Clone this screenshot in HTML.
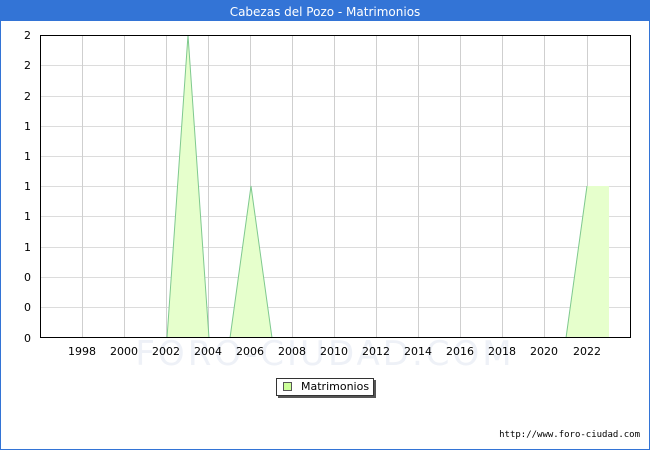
<!DOCTYPE html>
<html><head><style>
body{margin:0;width:650px;height:450px;overflow:hidden;font-family:"DejaVu Sans","Liberation Sans",sans-serif;}
</style></head><body>
<svg width="650" height="450" xmlns="http://www.w3.org/2000/svg" font-family="DejaVu Sans, Liberation Sans, sans-serif">
<rect x="0" y="0" width="650" height="450" fill="#fff"/>
<rect x="0.5" y="0.5" width="649" height="449" fill="none" stroke="#3374d6"/>
<rect x="0" y="0" width="650" height="21" fill="#3374d6"/>
<text x="325" y="16" fill="#fff" font-size="12" text-anchor="middle">Cabezas del Pozo - Matrimonios</text>
<text x="325" y="365" fill="#eef1f7" font-size="34" text-anchor="middle" letter-spacing="3">FORO-CIUDAD.COM</text>
<g stroke="#dcdcdc" stroke-width="1">
<line x1="40" y1="65.5" x2="631" y2="65.5"/><line x1="40" y1="96.5" x2="631" y2="96.5"/>
<line x1="40" y1="126.5" x2="631" y2="126.5"/><line x1="40" y1="156.5" x2="631" y2="156.5"/>
<line x1="40" y1="186.5" x2="631" y2="186.5"/><line x1="40" y1="216.5" x2="631" y2="216.5"/>
<line x1="40" y1="247.5" x2="631" y2="247.5"/><line x1="40" y1="277.5" x2="631" y2="277.5"/>
<line x1="40" y1="307.5" x2="631" y2="307.5"/>
</g>
<g stroke="#cfcfcf" stroke-width="1">
<line x1="82.5" y1="35" x2="82.5" y2="338"/><line x1="124.5" y1="35" x2="124.5" y2="338"/>
<line x1="166.5" y1="35" x2="166.5" y2="338"/><line x1="208.5" y1="35" x2="208.5" y2="338"/>
<line x1="250.5" y1="35" x2="250.5" y2="338"/><line x1="292.5" y1="35" x2="292.5" y2="338"/>
<line x1="334.5" y1="35" x2="334.5" y2="338"/><line x1="376.5" y1="35" x2="376.5" y2="338"/>
<line x1="418.5" y1="35" x2="418.5" y2="338"/><line x1="460.5" y1="35" x2="460.5" y2="338"/>
<line x1="502.5" y1="35" x2="502.5" y2="338"/><line x1="544.5" y1="35" x2="544.5" y2="338"/>
<line x1="587.5" y1="35" x2="587.5" y2="338"/>
</g>
<g fill="#e6ffcc" stroke="none">
<polygon points="167,338 188,35 209,338"/>
<polygon points="230,338 251,186 272,338"/>
<polygon points="566,338 587,186 609,186 609,338"/>
</g>
<g fill="none" stroke="#7fc98f" stroke-width="1">
<polyline points="167,338 188,35 209,338"/>
<polyline points="230,338 251,186 272,338"/>
<polyline points="566,338 587,186"/>
</g>
<rect x="40.5" y="35.5" width="590" height="302" fill="none" stroke="#000"/>
<g font-size="11" fill="#000" text-anchor="end">
<text x="31" y="39">2</text><text x="31" y="69">2</text><text x="31" y="100">2</text>
<text x="31" y="130">1</text><text x="31" y="160">1</text><text x="31" y="190">1</text>
<text x="31" y="220">1</text><text x="31" y="251">1</text><text x="31" y="281">0</text>
<text x="31" y="311">0</text><text x="31" y="342">0</text>
</g>
<g font-size="11" fill="#000" text-anchor="middle">
<text x="82" y="355">1998</text><text x="124" y="355">2000</text><text x="166" y="355">2002</text>
<text x="208" y="355">2004</text><text x="250" y="355">2006</text><text x="292" y="355">2008</text>
<text x="334" y="355">2010</text><text x="376" y="355">2012</text><text x="418" y="355">2014</text>
<text x="460" y="355">2016</text><text x="502" y="355">2018</text><text x="544" y="355">2020</text>
<text x="587" y="355">2022</text>
</g>
<rect x="278" y="380" width="98" height="18" fill="#555"/>
<rect x="276.5" y="378.5" width="97" height="17" fill="#fff" stroke="#333"/>
<rect x="283.5" y="382.5" width="8" height="8" fill="#ccff99" stroke="#555"/>
<text x="301" y="390" font-size="11">Matrimonios</text>
<text x="640" y="437" font-size="9" text-anchor="end" font-family="DejaVu Sans Mono, Liberation Mono, monospace">http://www.foro-ciudad.com</text>
</svg>
</body></html>
